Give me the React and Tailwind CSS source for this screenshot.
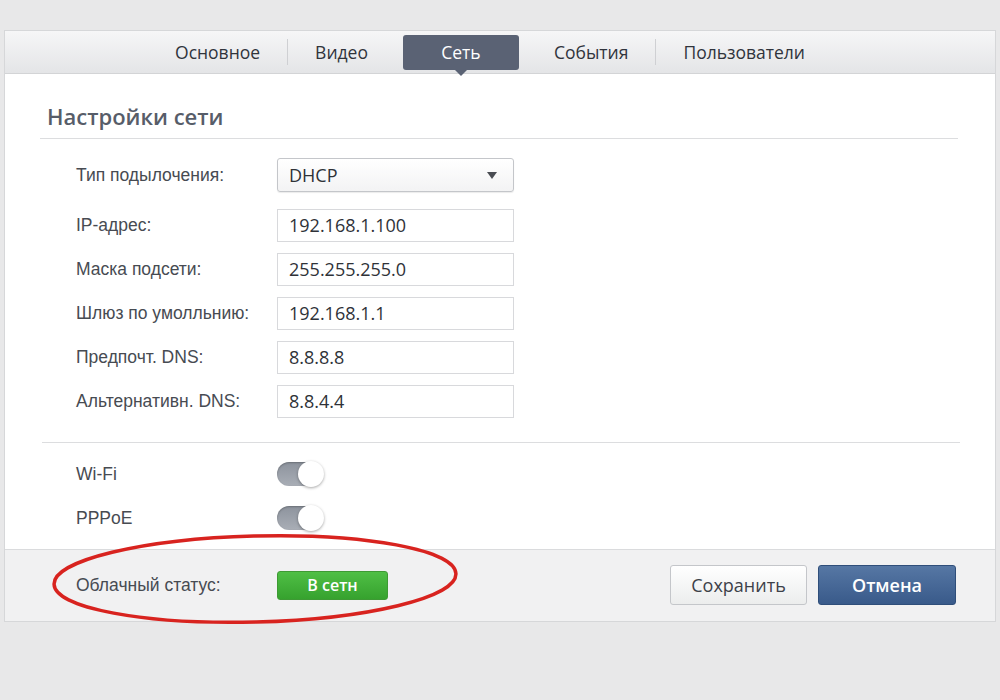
import React, { useState } from 'react';

const tabs = ['Основное', 'Видео', 'Сеть', 'События', 'Пользователи'];

const fields = [
  { label: 'IP-адрес:', value: '192.168.1.100' },
  { label: 'Маска подсети:', value: '255.255.255.0' },
  { label: 'Шлюз по умолльнию:', value: '192.168.1.1' },
  { label: 'Предпочт. DNS:', value: '8.8.8.8' },
  { label: 'Альтернативн. DNS:', value: '8.8.4.4' },
];

function Toggle({ on, onClick }) {
  return (
    <button
      type="button"
      onClick={onClick}
      className="relative h-[24px] w-[46px] rounded-full bg-gradient-to-b from-[#8d939d] to-[#a9aeb6] shadow-[inset_0_1px_2px_rgba(0,0,0,0.25)]"
    >
      <span
        className={
          on
            ? 'absolute right-[-1px] top-[-1px] h-[26px] w-[26px] rounded-full bg-white shadow-[0_1px_3px_rgba(0,0,0,0.35)]'
            : 'absolute left-[-1px] top-[-1px] h-[26px] w-[26px] rounded-full bg-white shadow-[0_1px_3px_rgba(0,0,0,0.35)]'
        }
      />
    </button>
  );
}

function App() {
  const [active, setActive] = useState('Сеть');
  const [wifi, setWifi] = useState(true);
  const [pppoe, setPppoe] = useState(true);

  return (
    <div className="min-h-screen w-full bg-[#e8e8e9] pt-[30px] pl-[4px] pr-[4px] font-['Liberation_Sans',Arial,sans-serif]">
      <div className="w-[992px] border border-[#d6d7d9] bg-white">
        {/* tab bar */}
        <div className="flex h-[43px] items-center justify-center bg-gradient-to-b from-[#f6f6f7] to-[#e4e5e7] border-b border-[#d3d4d6] pr-[20px] font-['Open_Sans',sans-serif] text-[17.5px] text-[#30343c]">
          {tabs.map((t, i) => {
            const isActive = t === active;
            const nextActive = tabs[i + 1] === active;
            return (
              <React.Fragment key={t}>
                <button
                  type="button"
                  onClick={() => setActive(t)}
                  className={
                    isActive
                      ? 'relative mx-[8px] flex h-[35px] w-[116px] items-center justify-center rounded-[3px] bg-[#5a6274] text-white'
                      : 'flex h-[35px] items-center px-[27px]'
                  }
                >
                  {t}
                  {isActive && (
                    <span className="absolute bottom-[-6px] left-1/2 h-0 w-0 -translate-x-1/2 border-x-[6px] border-t-[6px] border-x-transparent border-t-[#5a6274]" />
                  )}
                </button>
                {i < tabs.length - 1 && !isActive && !nextActive && (
                  <span className="h-[26px] w-px bg-[#cfd0d3]" />
                )}
              </React.Fragment>
            );
          })}
        </div>

        {/* content */}
        <div className="px-[35px] pt-[28px] pb-[17px]">
          <h2 className="pl-[7px] font-['Open_Sans',sans-serif] text-[22px] font-semibold leading-[28px] text-[#575d69]">
            Настройки сети
          </h2>
          <div className="mt-[8px] mr-[2px] h-px bg-[#dcdddf]" />

          <div className="flex flex-col pl-[36px] pt-[19px] text-[17.5px] text-[#474b52]">
            <div className="flex items-center">
              <span className="w-[201px]">Тип подылочения:</span>
              <div className="flex h-[34px] w-[237px] items-center justify-between rounded-[3px] border border-[#c4c6ca] bg-gradient-to-b from-white to-[#f3f3f4] pl-[11px] pr-[16px] font-['Open_Sans',sans-serif] text-[18px] text-[#2f3238] shadow-[0_1px_1px_rgba(0,0,0,0.08)]">
                DHCP
                <span className="h-0 w-0 border-x-[5px] border-t-[7px] border-x-transparent border-t-[#4a4d53]" />
              </div>
            </div>
            {fields.map((f, i) => (
              <div key={f.label} className={i === 0 ? 'mt-[17px] flex items-center' : 'mt-[11px] flex items-center'}>
                <span className="w-[201px]">{f.label}</span>
                <div className="flex h-[33px] w-[237px] items-center border border-[#d8d9dc] bg-white pl-[11px] font-['Open_Sans',sans-serif] text-[18px] text-[#2f3238]">
                  {f.value}
                </div>
              </div>
            ))}
          </div>

          <div className="mt-[24px] ml-[2px] h-px bg-[#dcdddf]" />

          <div className="flex flex-col pl-[36px] pt-[18px] text-[17.5px] text-[#474b52]">
            <div className="flex items-center">
              <span className="w-[201px]">Wi-Fi</span>
              <Toggle on={wifi} onClick={() => setWifi(!wifi)} />
            </div>
            <div className="mt-[18px] flex items-center">
              <span className="w-[201px]">PPPoE</span>
              <Toggle on={pppoe} onClick={() => setPppoe(!pppoe)} />
            </div>
          </div>
        </div>

        {/* footer */}
        <div className="relative flex h-[72px] items-center border-t border-[#dadbdd] bg-[#f1f1f2] pl-[71px] pr-[39px]">
          <span className="w-[201px] text-[17.5px] text-[#474b52]">Облачный статус:</span>
          <span className="flex h-[29px] w-[111px] items-center justify-center rounded-[3px] border border-[#3e9a34] bg-gradient-to-b from-[#4fbf45] to-[#36a22e] font-['Open_Sans',sans-serif] text-[16px] font-semibold text-white">
            В сетн
          </span>
          <div className="ml-auto flex gap-[11px] font-['Open_Sans',sans-serif] text-[18px]">
            <button
              type="button"
              className="h-[40px] w-[137px] rounded-[3px] border border-[#c4c6ca] bg-gradient-to-b from-white to-[#eceded] text-[#3d4149]"
            >
              Сохранить
            </button>
            <button
              type="button"
              className="h-[40px] w-[138px] rounded-[3px] border border-[#2f4e7a] bg-gradient-to-b from-[#5677a4] to-[#395a8a] font-semibold text-white"
            >
              Отмена
            </button>
          </div>

          {/* red highlight around cloud status */}
          <svg
            className="pointer-events-none absolute left-[44px] top-[-18px]"
            width="412"
            height="96"
            viewBox="0 0 412 96"
          >
            <ellipse cx="206" cy="47" rx="201" ry="43" fill="none" stroke="#d8231f" strokeWidth="3.5" transform="rotate(-1.5 206 47)" />
          </svg>
        </div>
      </div>
    </div>
  );
}

export default App;
